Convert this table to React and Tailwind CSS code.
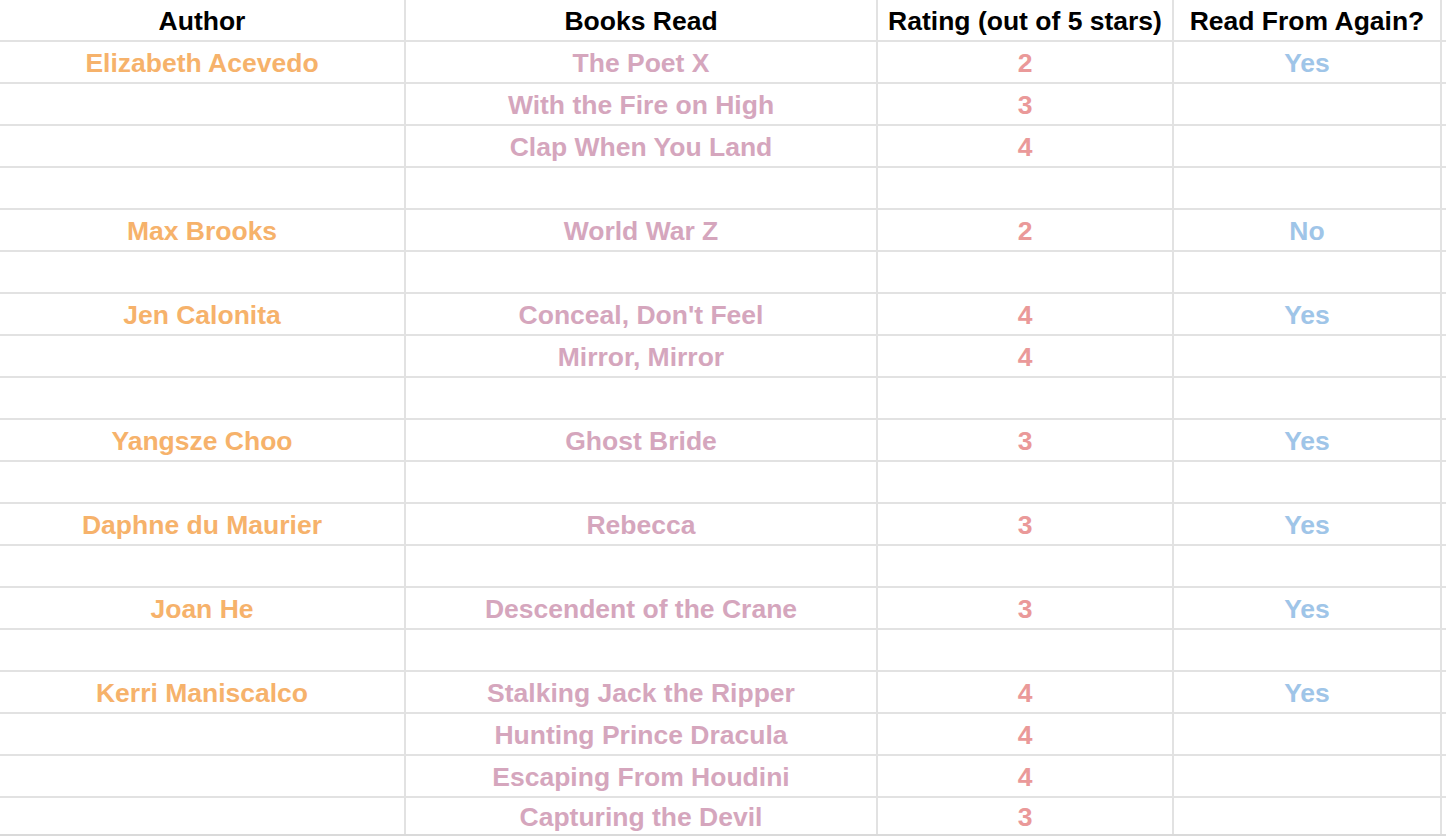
import React from "react";

const rows = [
  ["Elizabeth Acevedo", "The Poet X", "2", "Yes"],
  ["", "With the Fire on High", "3", ""],
  ["", "Clap When You Land", "4", ""],
  ["", "", "", ""],
  ["Max Brooks", "World War Z", "2", "No"],
  ["", "", "", ""],
  ["Jen Calonita", "Conceal, Don't Feel", "4", "Yes"],
  ["", "Mirror, Mirror", "4", ""],
  ["", "", "", ""],
  ["Yangsze Choo", "Ghost Bride", "3", "Yes"],
  ["", "", "", ""],
  ["Daphne du Maurier", "Rebecca", "3", "Yes"],
  ["", "", "", ""],
  ["Joan He", "Descendent of the Crane", "3", "Yes"],
  ["", "", "", ""],
  ["Kerri Maniscalco", "Stalking Jack the Ripper", "4", "Yes"],
  ["", "Hunting Prince Dracula", "4", ""],
  ["", "Escaping From Houdini", "4", ""],
  ["", "Capturing the Devil", "3", ""],
];

const cell = "shrink-0 border-r-2 border-[#e2e2e2] flex items-center justify-center pt-[2px]";

function Row({ cells, header, last }) {
  return (
    <div
      className={`flex border-b-2 ${last ? "h-[38px] border-[#dadada]" : "h-[42px] border-[#e2e2e2]"}`}
    >
      <div className={`w-[406px] ${cell} ${header ? "text-black" : "text-[#f6b26b]"}`}>{cells[0]}</div>
      <div className={`w-[472px] ${cell} ${header ? "text-black" : "text-[#d5a6bd]"}`}>{cells[1]}</div>
      <div className={`w-[296px] ${cell} ${header ? "text-black" : "text-[#ea9999]"}`}>{cells[2]}</div>
      <div className={`w-[268px] ${cell} ${header ? "text-black" : "text-[#9fc5e8]"}`}>{cells[3]}</div>
      <div className="flex-1" />
    </div>
  );
}

export default function App() {
  return (
    <div className="w-[1446px] h-[838px] bg-white overflow-hidden font-bold text-[26.5px] leading-none font-['Liberation_Sans',Arial,sans-serif]">
      <Row header cells={["Author", "Books Read", "Rating (out of 5 stars)", "Read From Again?"]} />
      {rows.map((r, i) => (
        <Row key={i} cells={r} last={i === rows.length - 1} />
      ))}
    </div>
  );
}
